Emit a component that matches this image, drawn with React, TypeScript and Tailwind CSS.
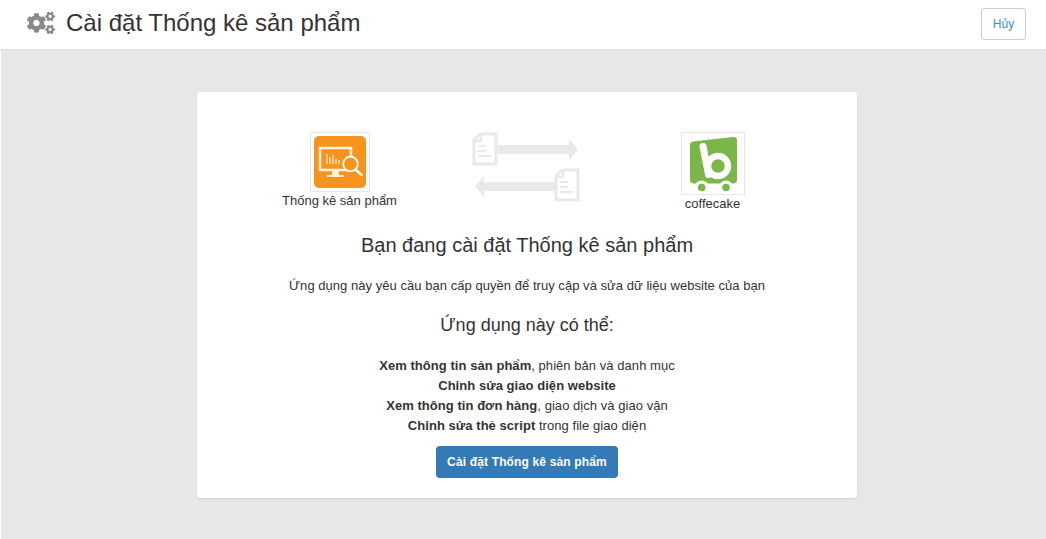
import { FaCogs } from "react-icons/fa";

function Doc({ className }: { className?: string }) {
  return (
    <svg viewBox="0 0 26 34" className={className} fill="none">
      <path d="M8 2h16v30H2V8z" fill="#fff" stroke="#e8e9ea" strokeWidth="3" />
      <path d="M9 2v7H2" stroke="#e8e9ea" strokeWidth="2.5" />
      <path d="M6 14h8M6 19h8M6 24h13" stroke="#e8e9ea" strokeWidth="2" />
    </svg>
  );
}

function Transfer() {
  return (
    <svg viewBox="0 0 108 70" className="w-[108px] h-[70px] block">
      <path d="M26 13h71V7l9 10.5-9 10.5v-6H26z" fill="#e8e9ea" />
      <path d="M84 50H12v-6L3 54.500l9 10.500v-6h72z" fill="#e8e9ea" />
    </svg>
  );
}

function StatsLogo() {
  return (
    <svg viewBox="0 0 52 52" className="w-[52px] h-[52px] block">
      <rect width="52" height="52" rx="5" fill="#f7941e" />
      <path d="M6 12h31v22H6z" fill="none" stroke="#fdf0dc" strokeWidth="2.500" />
      <path d="M13 18v10M16 21v7M19 19v9M22 23v5M25 24v4" stroke="#fbd9a8" strokeWidth="1.600" />
      <path d="M18 35h7v4h5v2H13v-2h5z" fill="#fdf0dc" />
      <circle cx="36.500" cy="28" r="7.300" fill="#f7941e" stroke="#fff" strokeWidth="1.800" />
      <path d="M41.500 33.500l6 5.500" stroke="#fff" strokeWidth="2.500" strokeLinecap="round" />
    </svg>
  );
}

function CakeLogo() {
  return (
    <svg viewBox="0 0 62 61" className="w-[62px] h-[61px] block">
      <path d="M8 12q0-3 3-3.500L51 4q4-.5 4 3.500v39q0 4-4 4H12q-4 0-4-4z" fill="#7ab648" />
      <circle cx="19.700" cy="54.500" r="7" fill="#fff" />
      <circle cx="44" cy="54.500" r="7" fill="#fff" />
      <circle cx="19.700" cy="54.500" r="3.800" fill="#7ab648" />
      <circle cx="44" cy="54.500" r="3.800" fill="#7ab648" />
      <path d="M21 13.500l5.500 28" stroke="#fff" strokeWidth="7" strokeLinecap="round" />
      <circle cx="36" cy="33" r="10" fill="none" stroke="#fff" strokeWidth="6.500" />
    </svg>
  );
}

export default function App() {
  return (
    <div className="h-[539px] overflow-hidden flex flex-col bg-white text-[#333] font-['Liberation_Sans',Arial,sans-serif]">
      <header className="h-[50px] shrink-0 flex items-center justify-between pl-[27px] pr-[20px] bg-white border-b border-[#dcdddf]">
        <div className="flex items-center gap-[11px] pb-[4px]">
          <FaCogs className="w-[28px] h-[28px] text-[#8a8a8a]" />
          <h1 className="text-[24px] leading-[26px] font-normal text-[#333]">Cài đặt Thống kê sản phẩm</h1>
        </div>
        <button className="w-[45px] h-[32px] mb-[1px] rounded-[3px] border border-[#ccc] bg-white text-[12px] text-[#428bca]">Hủy</button>
      </header>
      <main className="flex-1 bg-[#e6e7e9] ml-px pt-[42px]">
        <section className="w-[660px] h-[406px] ml-[196px] bg-white rounded-[3px] shadow-[0_1px_2px_rgba(0,0,0,0.1)] pt-[40px] flex flex-col items-center">
          <div className="flex items-start h-[80px] w-[489px] mr-[2px] justify-between">
            <div className="w-[116px] flex flex-col items-center">
              <div className="w-[60px] h-[60px] border border-[#e5e5e5] flex items-center justify-center">
                <StatsLogo />
              </div>
              <span className="text-[13px] leading-[17px] whitespace-nowrap">Thống kê sản phẩm</span>
            </div>
            <div className="relative w-[108px] h-[70px]">
              <Transfer />
              <Doc className="absolute left-0 top-0 w-[26px] h-[34px]" />
              <Doc className="absolute right-0 top-[36px] w-[26px] h-[34px]" />
            </div>
            <div className="w-[116px] flex flex-col items-center">
              <div className="w-[64px] h-[63px] border border-[#e5e5e5] flex items-center justify-center">
                <CakeLogo />
              </div>
              <span className="text-[13px] leading-[17px]">coffecake</span>
            </div>
          </div>
          <h2 className="mt-[21px] text-[20px] leading-[24px] font-normal text-center">Bạn đang cài đặt Thống kê sản phẩm</h2>
          <p className="mt-[20px] text-[13px] leading-[17px] tracking-[0.04px] text-center">Ứng dụng này yêu cầu bạn cấp quyền để truy cập và sửa dữ liệu website của bạn</p>
          <h3 className="mt-[19px] text-[18px] leading-[24px] font-normal text-center">Ứng dụng này có thể:</h3>
          <ul className="mt-[19px] text-[13px] leading-[20px] tracking-[0.05px] text-center">
            <li><b>Xem thông tin sản phẩm</b>, phiên bản và danh mục</li>
            <li><b>Chỉnh sửa giao diện website</b></li>
            <li><b>Xem thông tin đơn hàng</b>, giao dịch và giao vận</li>
            <li><b>Chỉnh sửa thẻ script</b> trong file giao diện</li>
          </ul>
          <button className="mt-[10px] w-[182px] h-[32px] rounded-[4px] bg-[#337ab7] text-white text-[12px] font-bold tracking-[0.15px]">Cài đặt Thống kê sản phẩm</button>
        </section>
      </main>
    </div>
  );
}
